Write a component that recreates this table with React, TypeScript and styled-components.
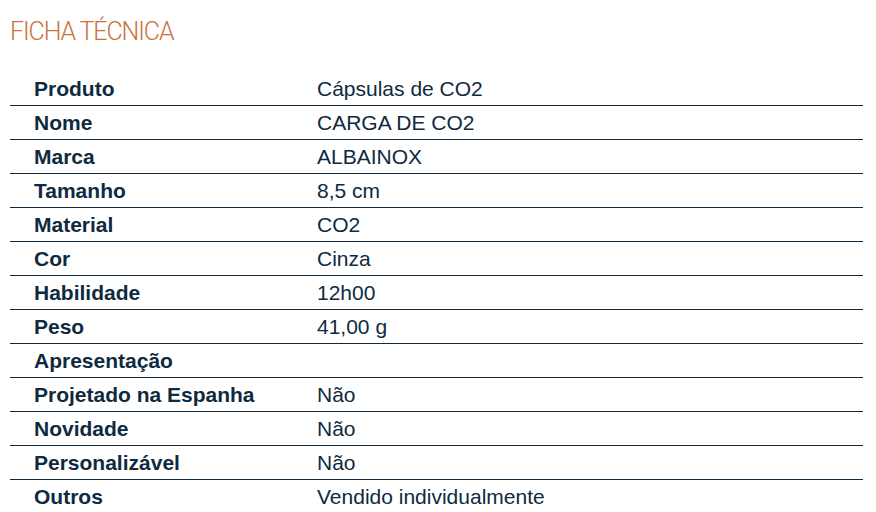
import { FC } from 'react';
import styled, { createGlobalStyle } from 'styled-components';

const specs: [string, string][] = [
  ['Produto', 'Cápsulas de CO2'],
  ['Nome', 'CARGA DE CO2'],
  ['Marca', 'ALBAINOX'],
  ['Tamanho', '8,5 cm'],
  ['Material', 'CO2'],
  ['Cor', 'Cinza'],
  ['Habilidade', '12h00'],
  ['Peso', '41,00 g'],
  ['Apresentação', ''],
  ['Projetado na Espanha', 'Não'],
  ['Novidade', 'Não'],
  ['Personalizável', 'Não'],
  ['Outros', 'Vendido individualmente'],
];

const App: FC = () => {
  return (
    <>
      <GlobalStyle />
      <Page>
        <Title>FICHA TÉCNICA</Title>
        <SpecTable>
          {specs.map(([label, value], i) => (
            <Row key={label} last={i === specs.length - 1}>
              <Label>{label}</Label>
              <Value>{value}</Value>
            </Row>
          ))}
        </SpecTable>
      </Page>
    </>
  );
};

export default App;

const GlobalStyle = createGlobalStyle`
  body {
    margin: 0;
    background: #ffffff;
  }
`;

const Page = styled.div`
  width: 853px;
  padding: 0 10px;
  color: #0f2a3e;
`;

const Title = styled.h2`
  margin: 0;
  height: 72px;
  padding-top: 17px;
  box-sizing: border-box;
  font-family: 'Roboto', sans-serif;
  font-weight: 300;
  font-size: 25px;
  letter-spacing: -1.1px;
  color: #c8743a;
`;

const SpecTable = styled.div`
  display: flex;
  flex-direction: column;
`;

const Row = styled.div<{ last?: boolean }>`
  display: grid;
  grid-template-columns: 283px 1fr;
  align-items: center;
  height: 32px;
  padding-top: 1px;
  border-bottom: 1px solid ${(p) => (p.last ? 'transparent' : '#0f2a3e')};
  font-family: 'Liberation Sans', Arial, sans-serif;
  font-size: 21px;
`;

const Label = styled.div`
  padding-left: 24px;
  font-weight: 700;
`;

const Value = styled.div`
  padding-left: 24px;
`;
